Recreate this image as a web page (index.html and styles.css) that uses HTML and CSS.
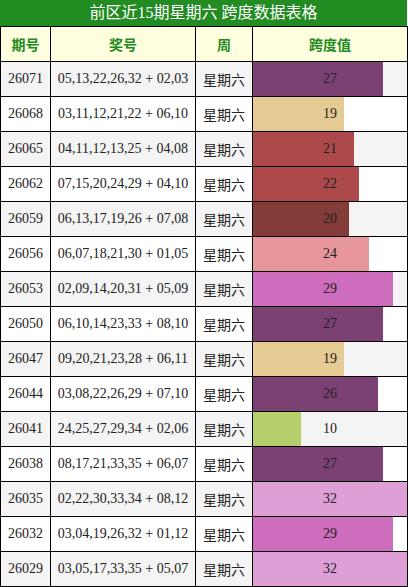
FILE: index.html
```html
<!DOCTYPE html>
<html lang="zh-CN">
<head>
    <meta charset="UTF-8">
    <title>前区近15期星期六 跨度数据表格</title>
    <link rel="stylesheet" href="styles.css">
</head>
<body>
    <div class="title">前区近15期星期六 跨度数据表格</div>
    <table class="span-table">
        <colgroup>
            <col class="c-issue">
            <col class="c-nums">
            <col class="c-week">
            <col class="c-span">
        </colgroup>
        <thead>
            <tr><th>期号</th><th>奖号</th><th>周</th><th>跨度值</th></tr>
        </thead>
        <tbody>
            <tr><td>26071</td><td>05,13,22,26,32 + 02,03</td><td class="week">星期六</td><td class="span"><div class="stack"><div class="bar" style="width:84.4%;background:#7b4173"></div><span>27</span></div></td></tr>
            <tr><td>26068</td><td>03,11,12,21,22 + 06,10</td><td class="week">星期六</td><td class="span"><div class="stack"><div class="bar" style="width:59.4%;background:#e7cb94"></div><span>19</span></div></td></tr>
            <tr><td>26065</td><td>04,11,12,13,25 + 04,08</td><td class="week">星期六</td><td class="span"><div class="stack"><div class="bar" style="width:65.6%;background:#ad494a"></div><span>21</span></div></td></tr>
            <tr><td>26062</td><td>07,15,20,24,29 + 04,10</td><td class="week">星期六</td><td class="span"><div class="stack"><div class="bar" style="width:68.8%;background:#ad494a"></div><span>22</span></div></td></tr>
            <tr><td>26059</td><td>06,13,17,19,26 + 07,08</td><td class="week">星期六</td><td class="span"><div class="stack"><div class="bar" style="width:62.5%;background:#843c39"></div><span>20</span></div></td></tr>
            <tr><td>26056</td><td>06,07,18,21,30 + 01,05</td><td class="week">星期六</td><td class="span"><div class="stack"><div class="bar" style="width:75%;background:#e7969c"></div><span>24</span></div></td></tr>
            <tr><td>26053</td><td>02,09,14,20,31 + 05,09</td><td class="week">星期六</td><td class="span"><div class="stack"><div class="bar" style="width:90.6%;background:#ce6dbd"></div><span>29</span></div></td></tr>
            <tr><td>26050</td><td>06,10,14,23,33 + 08,10</td><td class="week">星期六</td><td class="span"><div class="stack"><div class="bar" style="width:84.4%;background:#7b4173"></div><span>27</span></div></td></tr>
            <tr><td>26047</td><td>09,20,21,23,28 + 06,11</td><td class="week">星期六</td><td class="span"><div class="stack"><div class="bar" style="width:59.4%;background:#e7cb94"></div><span>19</span></div></td></tr>
            <tr><td>26044</td><td>03,08,22,26,29 + 07,10</td><td class="week">星期六</td><td class="span"><div class="stack"><div class="bar" style="width:81.3%;background:#7b4173"></div><span>26</span></div></td></tr>
            <tr><td>26041</td><td>24,25,27,29,34 + 02,06</td><td class="week">星期六</td><td class="span"><div class="stack"><div class="bar" style="width:31.3%;background:#b5cf6b"></div><span>10</span></div></td></tr>
            <tr><td>26038</td><td>08,17,21,33,35 + 06,07</td><td class="week">星期六</td><td class="span"><div class="stack"><div class="bar" style="width:84.4%;background:#7b4173"></div><span>27</span></div></td></tr>
            <tr><td>26035</td><td>02,22,30,33,34 + 08,12</td><td class="week">星期六</td><td class="span"><div class="stack"><div class="bar" style="width:100%;background:#de9ed6"></div><span>32</span></div></td></tr>
            <tr><td>26032</td><td>03,04,19,26,32 + 01,12</td><td class="week">星期六</td><td class="span"><div class="stack"><div class="bar" style="width:90.6%;background:#ce6dbd"></div><span>29</span></div></td></tr>
            <tr><td>26029</td><td>03,05,17,33,35 + 05,07</td><td class="week">星期六</td><td class="span"><div class="stack"><div class="bar" style="width:100%;background:#de9ed6"></div><span>32</span></div></td></tr>
        </tbody>
    </table>
</body>
</html>
```

FILE: styles.css
```css
body {
    margin: 0;
    background: #fff;
    font-family: "Liberation Serif", "Noto Sans CJK SC", serif;
    color: #222;
}

.title {
    width: 407px;
    height: 26px;
    line-height: 26px;
    background: #228b22;
    color: #fff;
    text-align: center;
    font-size: 16px;
}

.span-table {
    width: 407px;
    border-collapse: collapse;
    table-layout: fixed;
    font-size: 14px;
}

.c-issue { width: 50px; }
.c-nums { width: 145px; }
.c-week { width: 57px; }
.c-span { width: 155px; }

.span-table th,
.span-table td {
    border: 1px solid #000;
    height: 34px;
    padding: 0;
    text-align: center;
    box-sizing: border-box;
}

.span-table th {
    height: 35px;
    background: #ffffe0;
    color: #228b22;
    font-family: "Noto Sans CJK SC", sans-serif;
    font-weight: bold;
    font-size: 14px;
}

.span-table tbody tr:nth-child(odd) {
    background: #f4f4f4;
}

.span-table tbody tr:nth-child(even) {
    background: #fff;
}

.span-table td {
    height: 35px;
}

.week {
    font-family: "Noto Sans CJK SC", sans-serif;
    font-size: 14px;
}

.stack {
    display: grid;
    height: 34px;
}

.stack > * {
    grid-area: 1 / 1;
}

.bar {
    height: 100%;
}

.stack span {
    align-self: center;
    justify-self: center;
}
```
